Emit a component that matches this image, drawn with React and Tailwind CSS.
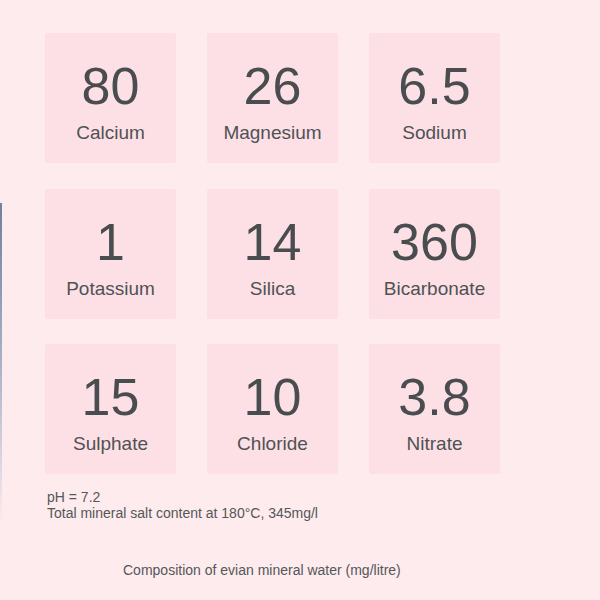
// evian mineral composition panel
const minerals = [
  { value: "80", name: "Calcium" },
  { value: "26", name: "Magnesium" },
  { value: "6.5", name: "Sodium" },
  { value: "1", name: "Potassium" },
  { value: "14", name: "Silica" },
  { value: "360", name: "Bicarbonate" },
  { value: "15", name: "Sulphate" },
  { value: "10", name: "Chloride" },
  { value: "3.8", name: "Nitrate" },
];

const MineralCard = ({ value, name }) => (
  <div className="w-[131px] h-[130px] bg-[#fde0e5] rounded-[2px] flex flex-col items-center pt-[27px]">
    <span className="text-[52px] leading-none text-[#4a4d50]">{value}</span>
    <span className="mt-[11px] text-[19px] leading-none text-[#4f5255]">{name}</span>
  </div>
);

const App = () => {
  return (
    <div
      className="relative w-[600px] h-[600px] bg-[#fdebee] overflow-hidden pl-[45px] pt-[33px]"
      style={{ fontFamily: '"Liberation Sans", Arial, sans-serif' }}
    >
      <div className="absolute left-0 top-[203px] w-[2px] h-[320px] bg-gradient-to-b from-[#6f819f] via-[#a7b2c8] to-transparent" />
      <div className="grid grid-cols-[131px_131px_131px] gap-x-[31px] gap-y-[25.5px]">
        {minerals.map((m) => (
          <MineralCard key={m.name} value={m.value} name={m.name} />
        ))}
      </div>
      <div className="mt-[15px] ml-[2px] text-[14px] leading-[16px] text-[#555759]">
        <p>pH = 7.2</p>
        <p>Total mineral salt content at 180°C, 345mg/l</p>
      </div>
      <p className="mt-[41px] ml-[78px] text-[14px] leading-[16px] text-[#555759]">
        Composition of evian mineral water (mg/litre)
      </p>
    </div>
  );
};

export default App;
